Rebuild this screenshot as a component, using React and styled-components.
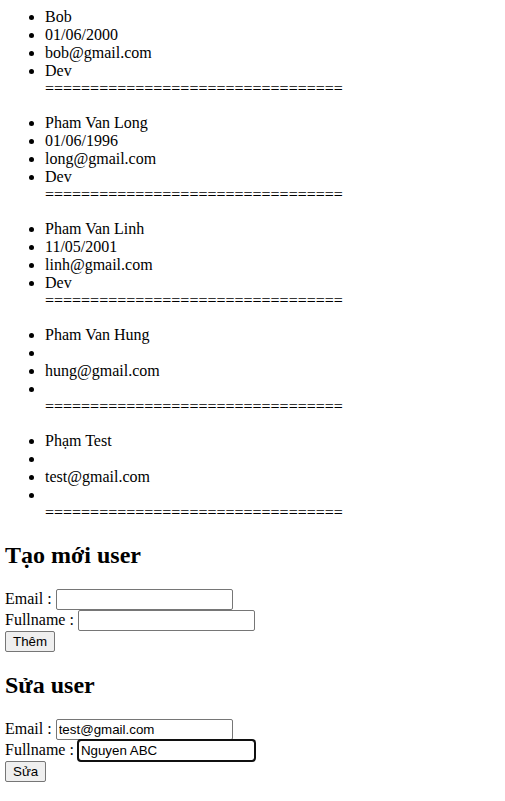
import React from 'react';
import styled, { createGlobalStyle } from 'styled-components';

const GlobalStyle = createGlobalStyle`
  body {
    margin: 0;
    background: #fff;
    color: #000;
    font-family: "Liberation Serif", "Times New Roman", serif;
    font-size: 16px;
  }
`;

const Page = styled.div`
  padding: 0 5px;
`;

const UserCard = styled.div`
  margin: 16px 0;

  &:first-child {
    margin-top: 8px;
  }
`;

const InfoList = styled.ul`
  margin: 0;
  padding-left: 40px;
  list-style: disc;
`;

const InfoItem = styled.li`
  min-height: 18px;
`;

const Divider = styled.div`
  padding-left: 40px;
`;

const Title = styled.h2`
  font-size: 24px;
  font-weight: bold;
  margin: 19.92px 0;
`;

const Field = styled.div`
  line-height: normal;
`;

const TextInput = styled.input`
  box-sizing: border-box;
  width: 177px;
  height: 21px;
  padding: 1px 2px;
  border: 1px solid #767676;
  border-radius: 2px;
  font-family: "Liberation Sans", Arial, sans-serif;
  font-size: 13.333px;
  color: #000;
  vertical-align: baseline;
  ${(p) =>
    p.$focused &&
    `
    outline: 2px solid #101010;
    outline-offset: -1px;
    border-radius: 3px;
  `}
`;

const Button = styled.button`
  box-sizing: border-box;
  font-family: "Liberation Sans", Arial, sans-serif;
  font-size: 13.333px;
  padding: 1px 7px;
  height: 21px;
  background: #efefef;
  border: 1px solid #767676;
  border-radius: 2px;
  color: #000;
`;

const users = [
  { name: 'Bob', birthday: '01/06/2000', email: 'bob@gmail.com', role: 'Dev' },
  { name: 'Pham Van Long', birthday: '01/06/1996', email: 'long@gmail.com', role: 'Dev' },
  { name: 'Pham Van Linh', birthday: '11/05/2001', email: 'linh@gmail.com', role: 'Dev' },
  { name: 'Pham Van Hung', birthday: '', email: 'hung@gmail.com', role: '' },
  { name: 'Phạm Test', birthday: '', email: 'test@gmail.com', role: '' },
];

const SEPARATOR = '='.repeat(33);

function UserForm({ title, email, fullname, action, focusName }) {
  return (
    <div>
      <Title>{title}</Title>
      <Field>
        Email : <TextInput type="text" defaultValue={email} />
      </Field>
      <Field>
        Fullname : <TextInput type="text" defaultValue={fullname} $focused={focusName} />
      </Field>
      <Button>{action}</Button>
    </div>
  );
}

export default function App() {
  return (
    <Page>
      <GlobalStyle />
      {users.map((u) => (
        <UserCard key={u.email}>
          <InfoList>
            <InfoItem>{u.name}</InfoItem>
            <InfoItem>{u.birthday}</InfoItem>
            <InfoItem>{u.email}</InfoItem>
            <InfoItem>{u.role}</InfoItem>
          </InfoList>
          <Divider>{SEPARATOR}</Divider>
        </UserCard>
      ))}
      <UserForm title="Tạo mới user" email="" fullname="" action="Thêm" />
      <UserForm title="Sửa user" email="test@gmail.com" fullname="Nguyen ABC" action="Sửa" focusName />
    </Page>
  );
}
